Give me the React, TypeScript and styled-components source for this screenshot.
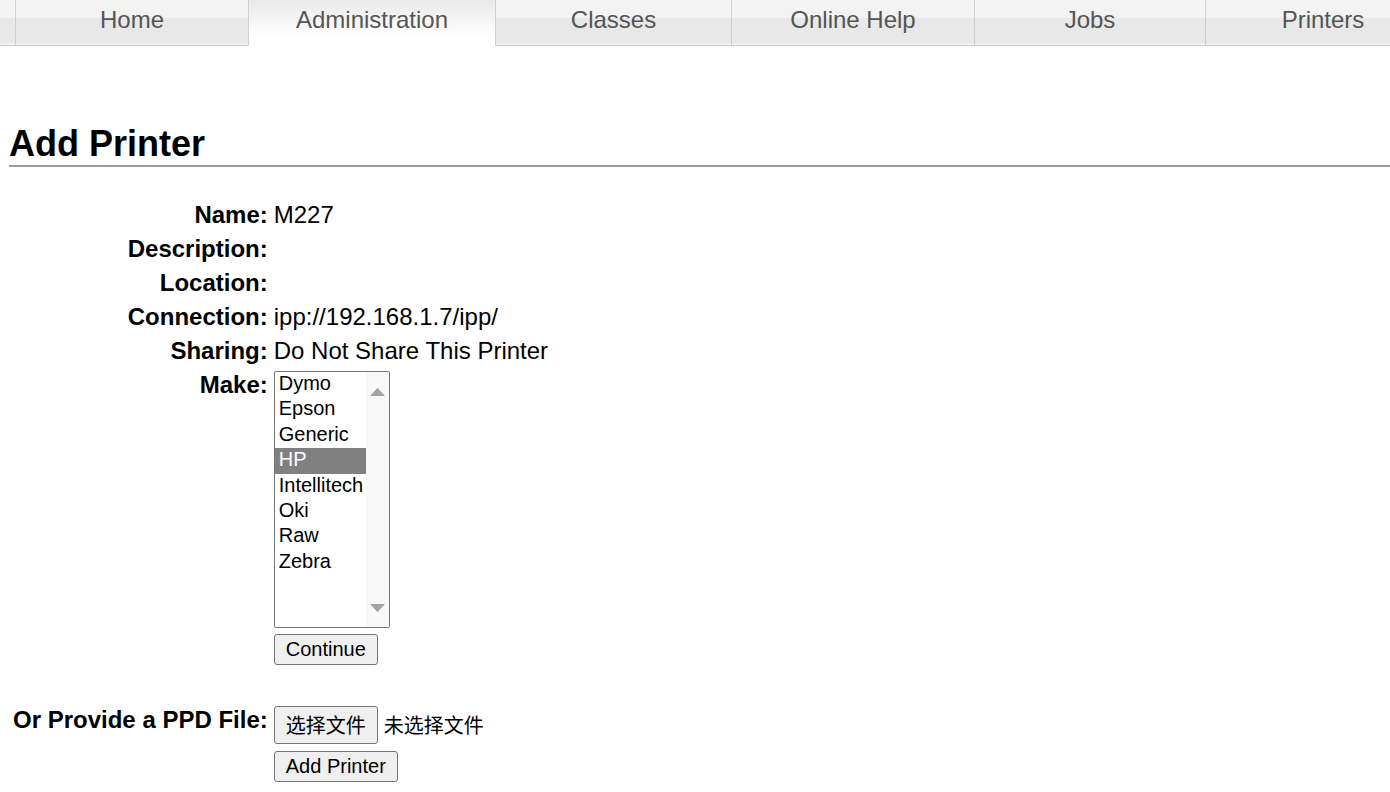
import React from "react";
import styled, { createGlobalStyle, css } from "styled-components";

const Global = createGlobalStyle`
  html, body { margin: 0; padding: 0; background: #fff; }
  body {
    font-family: "Liberation Sans", Arial, "Noto Sans CJK SC", sans-serif;
    color: #000;
    overflow: hidden;
  }
`;

const TabBar = styled.nav`
  display: flex;
  width: 100%;
  overflow: hidden;
  height: 46px;
`;

const Tab = styled.div<{ $w: number; $active?: boolean }>`
  flex: 0 0 ${(p) => p.$w}px;
  box-sizing: border-box;
  height: 46px;
  border-right: 1px solid #cfcfcf;
  text-align: center;
  font-size: 24px;
  line-height: 40px;
  color: #555;
  white-space: nowrap;
  ${(p) =>
    p.$active
      ? css`
          background: linear-gradient(to bottom, #e9e9e9 0%, #f6f6f6 45%, #ffffff 80%);
        `
      : css`
          background: linear-gradient(
            to bottom,
            #f3f3f3 0px,
            #f3f3f3 18px,
            #e8e8e8 18px,
            #e8e8e8 43px,
            #f1f1f1 43px,
            #f1f1f1 45px
          );
          border-bottom: 1px solid #d0d0d0;
        `}
`;

const Heading = styled.h2`
  margin: 77px 0 0 9px;
  padding: 0;
  font-size: 36px;
  line-height: 42px;
  font-weight: bold;
  border-bottom: 2px solid #9a9a9a;
`;

const Form = styled.div`
  display: grid;
  grid-template-columns: auto 1fr;
  column-gap: 6px;
  margin: 31px 0 0 9px;
  align-items: start;
`;

const Label = styled.div`
  padding: 3px 0 3px 4px;
  text-align: right;
  font-weight: bold;
  font-size: 24px;
  line-height: 28px;
  white-space: nowrap;
`;

const Value = styled.div`
  padding: 3px 0;
  font-size: 24px;
  line-height: 28px;
  min-height: 28px;
  display: flex;
  flex-direction: column;
  align-items: flex-start;
`;

const Spacer = styled.div`
  grid-column: 1 / -1;
  height: 35px;
`;

const ListBox = styled.div`
  display: flex;
  box-sizing: border-box;
  width: 116px;
  height: 257px;
  border: 1px solid #767676;
  border-radius: 2px;
  background: #fff;
`;

const OptionList = styled.div`
  width: 91px;
  display: flex;
  flex-direction: column;
`;

const Option = styled.div<{ $selected?: boolean }>`
  height: 25.4px;
  line-height: 23.5px;
  padding-left: 4px;
  font-size: 20px;
  white-space: nowrap;
  background: ${(p) => (p.$selected ? "#808080" : "transparent")};
  color: ${(p) => (p.$selected ? "#fff" : "#000")};
`;

const ScrollTrack = styled.div`
  flex: 1;
  background: #f8f8f8;
  display: flex;
  flex-direction: column;
  justify-content: space-between;
  align-items: center;
  padding: 16px 0 15px;
`;

const Button = styled.button`
  font-family: "Liberation Sans", Arial, "Noto Sans CJK SC", sans-serif;
  font-size: 20px;
  line-height: 23px;
  padding: 3px 11px;
  border: 1px solid #767676;
  border-radius: 3px;
  background: #efefef;
  color: #000;
  margin: 0;
`;

const MakeCell = styled.div`
  display: flex;
  flex-direction: column;
  align-items: flex-start;
  gap: 6px;
`;

const PpdCell = styled.div`
  display: flex;
  flex-direction: column;
  align-items: flex-start;
  gap: 7px;
`;

const FileRow = styled.div`
  display: flex;
  align-items: center;
  gap: 6px;
`;

const FileButton = styled(Button)`
  font-family: "Noto Sans CJK SC", sans-serif;
  line-height: 30px;
  padding: 3px 11px;
`;

const FileName = styled.span`
  font-family: "Noto Sans CJK SC", sans-serif;
  font-size: 20px;
  line-height: 30px;
`;

const tabs: { label: string; w: number; active?: boolean }[] = [
  { label: "", w: 16 },
  { label: "Home", w: 233 },
  { label: "Administration", w: 247, active: true },
  { label: "Classes", w: 236 },
  { label: "Online Help", w: 243 },
  { label: "Jobs", w: 231 },
  { label: "Printers", w: 235 },
];

const makes = ["Dymo", "Epson", "Generic", "HP", "Intellitech", "Oki", "Raw", "Zebra"];

const Arrow = ({ up }: { up?: boolean }) => (
  <svg width="15" height="8" viewBox="0 0 15 8">
    <polygon points={up ? "0,8 7.5,0 15,8" : "0,0 7.5,8 15,0"} fill="#a3a3a3" />
  </svg>
);

export default function App() {
  return (
    <>
      <Global />
      <TabBar>
        {tabs.map((t, i) => (
          <Tab key={i} $w={t.w} $active={t.active}>
            {t.label}
          </Tab>
        ))}
      </TabBar>
      <Heading>Add Printer</Heading>
      <Form>
        <Label>Name:</Label>
        <Value>M227</Value>
        <Label>Description:</Label>
        <Value />
        <Label>Location:</Label>
        <Value />
        <Label>Connection:</Label>
        <Value>ipp://192.168.1.7/ipp/</Value>
        <Label>Sharing:</Label>
        <Value>Do Not Share This Printer</Value>
        <Label>Make:</Label>
        <Value>
          <MakeCell>
            <ListBox>
              <OptionList>
                {makes.map((m) => (
                  <Option key={m} $selected={m === "HP"}>
                    {m}
                  </Option>
                ))}
              </OptionList>
              <ScrollTrack>
                <Arrow up />
                <Arrow />
              </ScrollTrack>
            </ListBox>
            <Button>Continue</Button>
          </MakeCell>
        </Value>
        <Spacer />
        <Label>Or Provide a PPD File:</Label>
        <Value>
          <PpdCell>
            <FileRow>
              <FileButton>选择文件</FileButton>
              <FileName>未选择文件</FileName>
            </FileRow>
            <Button>Add Printer</Button>
          </PpdCell>
        </Value>
      </Form>
    </>
  );
}
